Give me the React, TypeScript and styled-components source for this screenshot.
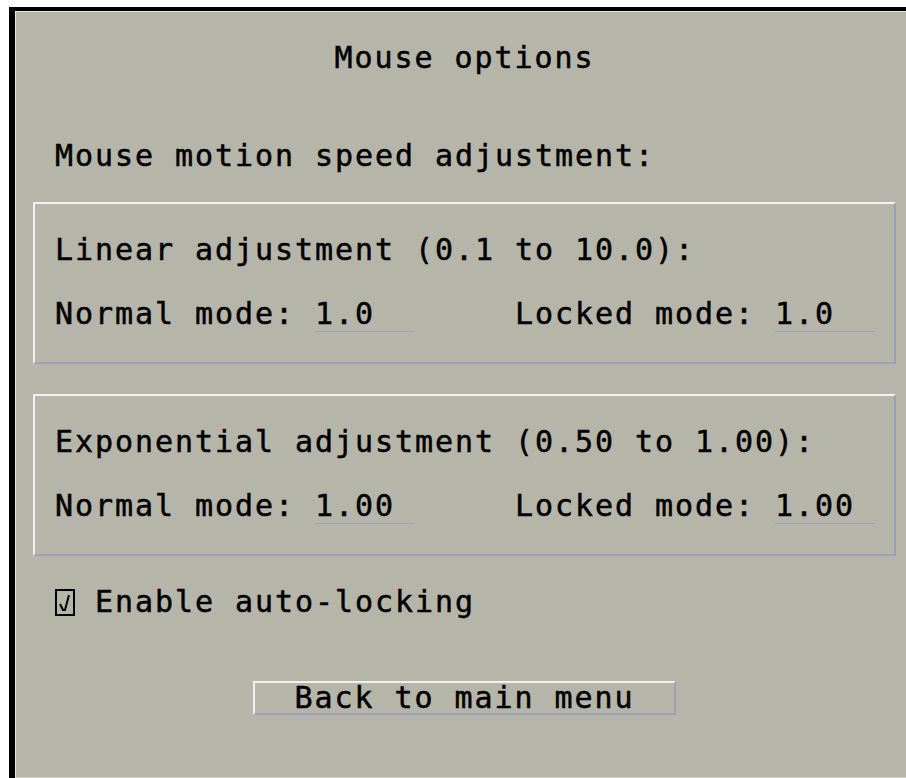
import React from "react";
import styled, { createGlobalStyle } from "styled-components";

const Global = createGlobalStyle`
  html, body {
    margin: 0;
    padding: 0;
    background: #ffffff;
    overflow: hidden;
  }
  body {
    font-family: "DejaVu Sans Mono", "Liberation Mono", monospace;
  }
`;

const Screen = styled.div`
  margin: 7px 0 0 9px;
  height: 771px;
  box-sizing: border-box;
  border-top: 4px solid #000;
  border-left: 6px solid #000;
  display: flex;
`;

const Panel = styled.div`
  flex: 1;
  box-sizing: border-box;
  background: #b5b6a9;
  border-top: 1px solid #e6e6e2;
  border-left: 1px solid #e6e6e2;
  border-bottom: 1px solid #d4d4d0;
  padding: 31px 0 0 17px;
  color: #000;
  font-size: 30px;
  line-height: 30px;
  letter-spacing: 1.94px;
  -webkit-text-stroke: 0.5px #000;
`;

const Column = styled.div`
  width: 863px;
  display: flex;
  flex-direction: column;
`;

const Title = styled.div`
  text-align: center;
  white-space: pre;
`;

const Heading = styled.div`
  margin-top: 68px;
  padding-left: 22px;
  white-space: pre;
`;

const Group = styled.section<{ $gap: number }>`
  margin-top: ${(p) => p.$gap}px;
  box-sizing: border-box;
  height: 162px;
  border-top: 2px solid #f1f1ee;
  border-left: 2px solid #f1f1ee;
  border-bottom: 2px solid #a09fba;
  border-right: 2px solid #a09fba;
  padding: 31px 19px 0 20px;
  display: flex;
  flex-direction: column;
  gap: 34px;
`;

const Line = styled.div`
  white-space: pre;
`;

const Row = styled.div`
  display: flex;
  justify-content: space-between;
  white-space: pre;
`;

const Field = styled.span`
  display: inline-block;
  width: 100px;
  padding-bottom: 2px;
  margin-bottom: -3px;
  border-bottom: 1px solid #a3a2bb;
`;

const CheckRow = styled.label`
  margin-top: 31px;
  padding-left: 22px;
  white-space: pre;
  display: block;
`;

const Box = styled.svg`
  width: 20px;
  height: 27px;
  vertical-align: -4px;
`;

const Button = styled.button`
  margin: 64px auto 0;
  width: 423px;
  height: 34px;
  box-sizing: border-box;
  padding: 0;
  background: transparent;
  border-top: 2px solid #f1f1ee;
  border-left: 2px solid #f1f1ee;
  border-bottom: 2px solid #a09fba;
  border-right: 2px solid #a09fba;
  font: inherit;
  letter-spacing: inherit;
  color: inherit;
  -webkit-text-stroke: inherit;
  text-align: center;
  white-space: pre;
`;

const Setting = ({ label, value }: { label: string; value: string }) => (
  <span>
    {label} <Field>{value}</Field>
  </span>
);

const AdjustmentGroup = ({
  title,
  normal,
  locked,
  gap,
}: {
  title: string;
  normal: string;
  locked: string;
  gap: number;
}) => (
  <Group $gap={gap}>
    <Line>{title}</Line>
    <Row>
      <Setting label="Normal mode:" value={normal} />
      <Setting label="Locked mode:" value={locked} />
    </Row>
  </Group>
);

export default function App() {
  return (
    <>
      <Global />
      <Screen>
        <Panel>
          <Column>
            <Title>Mouse options</Title>
            <Heading>Mouse motion speed adjustment:</Heading>
            <AdjustmentGroup
              gap={31}
              title="Linear adjustment (0.1 to 10.0):"
              normal="1.0"
              locked="1.0"
            />
            <AdjustmentGroup
              gap={30}
              title="Exponential adjustment (0.50 to 1.00):"
              normal="1.00"
              locked="1.00"
            />
            <CheckRow>
              <Box viewBox="0 0 20 27">
                <rect x="1" y="1" width="18" height="25" fill="none" stroke="#000" strokeWidth="2" />
                <path d="M5 15 L8 21 L10 21 L14 6" fill="none" stroke="#000" strokeWidth="2" />
              </Box>
              {" Enable auto-locking"}
            </CheckRow>
            <Button>Back to main menu</Button>
          </Column>
        </Panel>
      </Screen>
    </>
  );
}
